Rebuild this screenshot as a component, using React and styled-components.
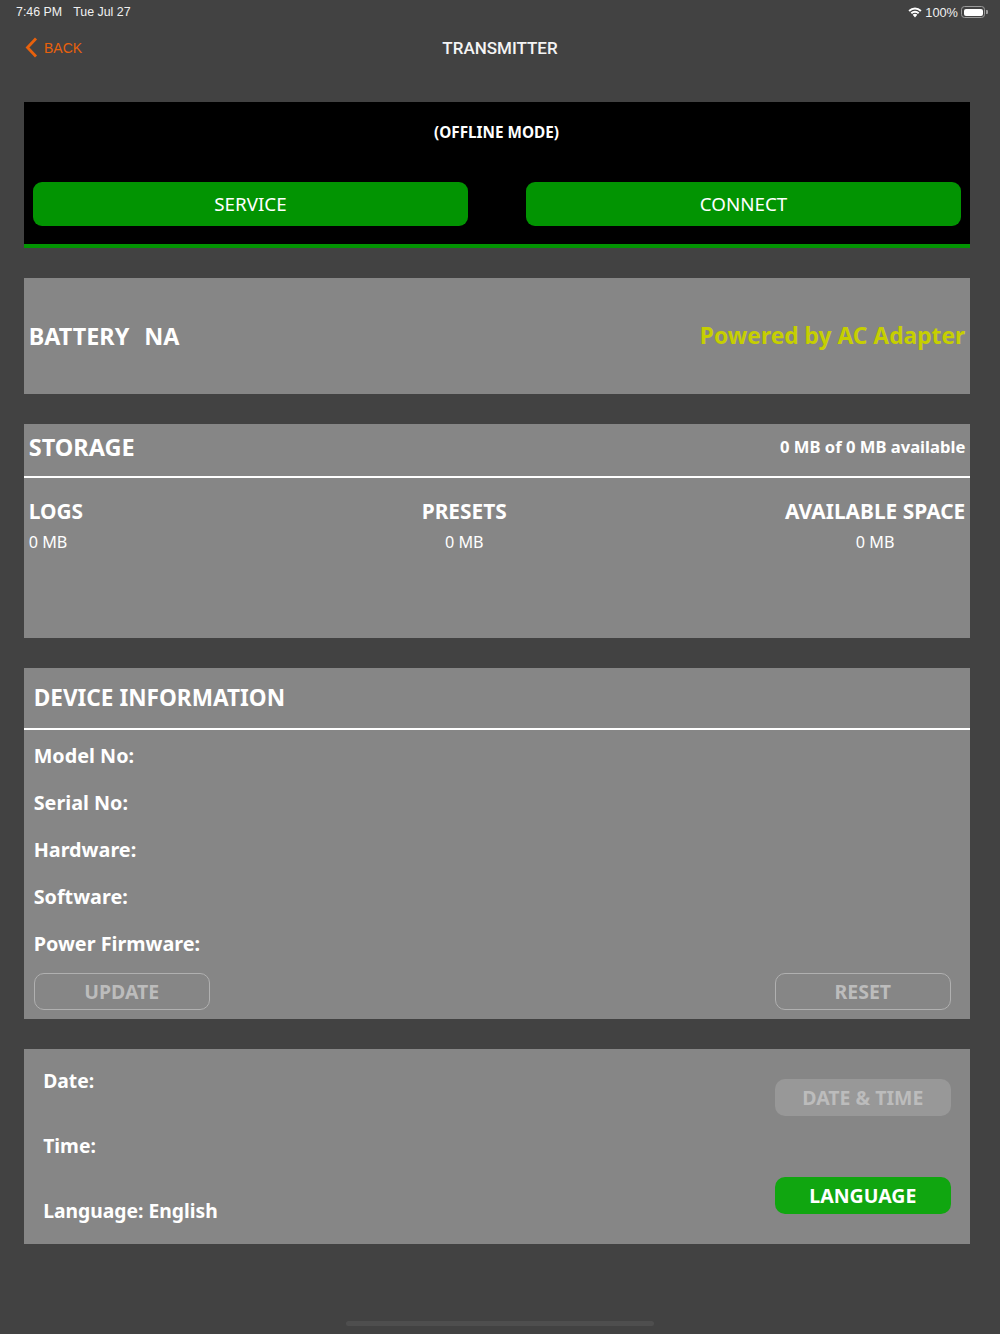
import React from 'react';
import styled, { createGlobalStyle } from 'styled-components';

const GlobalStyle = createGlobalStyle`
  html, body {
    margin: 0;
    padding: 0;
    background: #424242;
  }
  * {
    box-sizing: border-box;
  }
`;

function WifiIcon() {
  return (
    <svg width="14" height="11" viewBox="0 0 14 11">
      <path d="M1.100 3.900C2.700 2.400 4.700 1.500 7 1.500s4.300.9 5.900 2.400" fill="none" stroke="#fff" strokeWidth="2" />
      <path d="M3.300 6.200C4.300 5.300 5.600 4.700 7 4.700s2.700.6 3.700 1.500" fill="none" stroke="#fff" strokeWidth="2" />
      <path d="M7 6.800c-.9 0-1.700.4-2.300.9L7 10.400l2.300-2.700c-.6-.5-1.400-.9-2.300-.9z" fill="#fff" />
    </svg>
  );
}

function BatteryIcon() {
  return (
    <BatteryShell>
      <BatteryFill />
      <BatteryCap />
    </BatteryShell>
  );
}

function App() {
  return (
    <Page>
      <GlobalStyle />
      <StatusBar>
        <StatusLeft>
          <span>7:46 PM</span>
          <span>Tue Jul 27</span>
        </StatusLeft>
        <StatusRight>
          <WifiIcon />
          <span>100%</span>
          <BatteryIcon />
        </StatusRight>
      </StatusBar>

      <NavBar>
        <BackLink>
          <svg width="13" height="21" viewBox="0 0 13 21">
            <path d="M11 1.500 2.500 10.500 11 19.500" fill="none" stroke="#e8610c" strokeWidth="2.800" />
          </svg>
          <span>BACK</span>
        </BackLink>
        <NavTitle>TRANSMITTER</NavTitle>
      </NavBar>

      <Content>
        <ModePanel>
          <ModeLabel>(OFFLINE MODE)</ModeLabel>
          <ModeButtons>
            <ModeButton>SERVICE</ModeButton>
            <ModeButton>CONNECT</ModeButton>
          </ModeButtons>
        </ModePanel>

        <BatteryPanel>
          <BatteryLabel>
            <span>BATTERY</span>
            <span>NA</span>
          </BatteryLabel>
          <PowerSource>Powered by AC Adapter</PowerSource>
        </BatteryPanel>

        <StoragePanel>
          <StorageHeader>
            <StorageTitle>STORAGE</StorageTitle>
            <StorageSummary>0 MB of 0 MB available</StorageSummary>
          </StorageHeader>
          <StorageColumns>
            <StorageColumn>
              <StorageName>LOGS</StorageName>
              <StorageValue>0 MB</StorageValue>
            </StorageColumn>
            <StorageColumn>
              <StorageName>PRESETS</StorageName>
              <StorageValue>0 MB</StorageValue>
            </StorageColumn>
            <StorageColumn>
              <StorageName>AVAILABLE SPACE</StorageName>
              <StorageValue>0 MB</StorageValue>
            </StorageColumn>
          </StorageColumns>
        </StoragePanel>

        <DevicePanel>
          <DeviceHeader>DEVICE INFORMATION</DeviceHeader>
          <DeviceRows>
            <DeviceRow>Model No:</DeviceRow>
            <DeviceRow>Serial No:</DeviceRow>
            <DeviceRow>Hardware:</DeviceRow>
            <DeviceRow>Software:</DeviceRow>
            <DeviceRow>Power Firmware:</DeviceRow>
          </DeviceRows>
          <DeviceActions>
            <ActionButton $kind="outline">UPDATE</ActionButton>
            <ActionButton $kind="outline">RESET</ActionButton>
          </DeviceActions>
        </DevicePanel>

        <SettingsPanel>
          <SettingsLabels>
            <SettingsLabel>Date:</SettingsLabel>
            <SettingsLabel>Time:</SettingsLabel>
            <SettingsLabel>Language: English</SettingsLabel>
          </SettingsLabels>
          <SettingsButtons>
            <ActionButton $kind="muted">DATE &amp; TIME</ActionButton>
            <ActionButton $kind="green">LANGUAGE</ActionButton>
          </SettingsButtons>
        </SettingsPanel>
      </Content>

      <HomeBarRow>
        <HomeBar />
      </HomeBarRow>
    </Page>
  );
}

export default App;

const font = `'Noto Sans', 'Open Sans', sans-serif`;

const Page = styled.div`
  width: 1000px;
  height: 1334px;
  background: #424242;
  color: #fff;
  font-family: ${font};
  display: flex;
  flex-direction: column;
  overflow: hidden;
`;

const StatusBar = styled.div`
  height: 24px;
  padding: 0 15px 0 16px;
  display: flex;
  align-items: center;
  justify-content: space-between;
  font-family: 'Liberation Sans', sans-serif;
  font-size: 12.400px;
  color: #f0f0f0;
`;

const StatusLeft = styled.div`
  display: flex;
  gap: 11px;
`;

const StatusRight = styled.div`
  display: flex;
  align-items: center;
  gap: 3px;
  font-size: 12.800px;
`;

const BatteryShell = styled.div`
  position: relative;
  width: 24px;
  height: 12px;
  padding: 1.500px;
  border: 1px solid #9a9a9a;
  border-radius: 3.500px;
`;

const BatteryFill = styled.div`
  width: 100%;
  height: 100%;
  background: #fff;
  border-radius: 2px;
`;

const BatteryCap = styled.div`
  position: absolute;
  right: -3.500px;
  top: 3px;
  width: 1.500px;
  height: 4px;
  background: #9a9a9a;
  border-radius: 0 1px 1px 0;
`;

const NavBar = styled.div`
  position: relative;
  height: 48px;
  display: flex;
  align-items: center;
  justify-content: center;
`;

const BackLink = styled.div`
  position: absolute;
  left: 25px;
  top: 13px;
  display: flex;
  align-items: center;
  gap: 6px;
  font-family: 'Liberation Sans', sans-serif;
  font-size: 14px;
  color: #e8610c;
`;

const NavTitle = styled.div`
  font-family: 'Roboto', sans-serif;
  font-size: 17px;
  font-weight: 500;
  line-height: 20px;
  color: #f4f4f4;
`;

const Content = styled.div`
  margin: 29.700px 29.700px 0 23.700px;
  display: flex;
  flex-direction: column;
  gap: 29.500px;
`;

const ModePanel = styled.section`
  height: 146.400px;
  background: #000;
  border-bottom: 4px solid #029402;
  padding: 0 9.500px;
`;

const ModeLabel = styled.div`
  height: 80px;
  padding: 20px 1px 0 0;
  text-align: center;
  font-size: 15.300px;
  font-weight: 700;
  line-height: 20px;
`;

const ModeButtons = styled.div`
  display: flex;
  justify-content: space-between;
`;

const ModeButton = styled.button`
  width: 434.500px;
  height: 44px;
  padding: 0;
  border: 0;
  border-radius: 9px;
  background: #029402;
  color: #fff;
  font-family: ${font};
  font-size: 18.800px;
`;

const GreyPanel = styled.section`
  background: #868686;
`;

const BatteryPanel = styled(GreyPanel)`
  height: 116.600px;
  padding: 0 5px;
  display: flex;
  align-items: center;
  justify-content: space-between;
  font-weight: 700;
`;

const BatteryLabel = styled.div`
  display: flex;
  gap: 15px;
  font-size: 23.400px;
`;

const PowerSource = styled.div`
  font-size: 22.800px;
  color: #c6cf00;
`;

const StoragePanel = styled(GreyPanel)`
  height: 214.600px;
`;

const StorageHeader = styled.div`
  height: 54px;
  padding: 0 5px 5px;
  border-bottom: 2px solid #fff;
  display: flex;
  align-items: center;
  justify-content: space-between;
`;

const StorageTitle = styled.h2`
  margin: 0;
  font-size: 23.500px;
  font-weight: 700;
`;

const StorageSummary = styled.div`
  padding-bottom: 2px;
  font-size: 16.600px;
  font-weight: 700;
`;

const StorageColumns = styled.div`
  padding: 20px 5px 0;
  display: grid;
  grid-template-columns: 393px auto 1fr;
`;

const StorageColumn = styled.div`
  display: flex;
  flex-direction: column;
  align-items: center;
  gap: 5px;
  &:first-child {
    align-items: flex-start;
  }
  &:last-child {
    justify-self: end;
  }
`;

const StorageName = styled.div`
  font-size: 20.900px;
  font-weight: 700;
  line-height: 26px;
`;

const StorageValue = styled.div`
  padding-top: 1px;
  font-size: 16.200px;
  line-height: 24px;
`;

const DevicePanel = styled(GreyPanel)`
  height: 351.300px;
`;

const DeviceHeader = styled.h2`
  margin: 0;
  height: 62px;
  padding: 0 10px 1px;
  border-bottom: 2px solid #fff;
  display: flex;
  align-items: center;
  font-size: 22.600px;
  font-weight: 700;
`;

const DeviceRows = styled.div`
  height: 243px;
  padding: 2px 10px 0;
`;

const DeviceRow = styled.div`
  height: 47px;
  display: flex;
  align-items: center;
  font-size: 19.800px;
  font-weight: 700;
`;

const DeviceActions = styled.div`
  padding: 0 19.500px 0 10px;
  display: flex;
  justify-content: space-between;
`;

const ActionButton = styled.button`
  width: 176px;
  height: 37px;
  padding: 0;
  border-radius: 10px;
  font-family: ${font};
  font-size: 19.500px;
  font-weight: 700;
  border: ${(props) => (props.$kind === 'outline' ? '1.500px solid #b0b0b0' : '0')};
  background: ${(props) =>
    props.$kind === 'green' ? '#10a610' : props.$kind === 'muted' ? '#989898' : 'transparent'};
  color: ${(props) => (props.$kind === 'green' ? '#fff' : '#bcbcbc')};
`;

const SettingsPanel = styled(GreyPanel)`
  height: 195.200px;
  padding: 0 19.500px;
  display: flex;
  justify-content: space-between;
`;

const SettingsLabels = styled.div`
  padding-top: 19px;
  display: flex;
  flex-direction: column;
  gap: 39px;
`;

const SettingsLabel = styled.div`
  font-size: 19.300px;
  font-weight: 700;
  line-height: 26px;
`;

const SettingsButtons = styled.div`
  padding-top: 30px;
  display: flex;
  flex-direction: column;
  gap: 61px;
`;

const HomeBarRow = styled.div`
  margin-top: 77px;
  display: flex;
  justify-content: center;
`;

const HomeBar = styled.div`
  width: 308px;
  height: 5px;
  border-radius: 3px;
  background: #4e4e4e;
`;
